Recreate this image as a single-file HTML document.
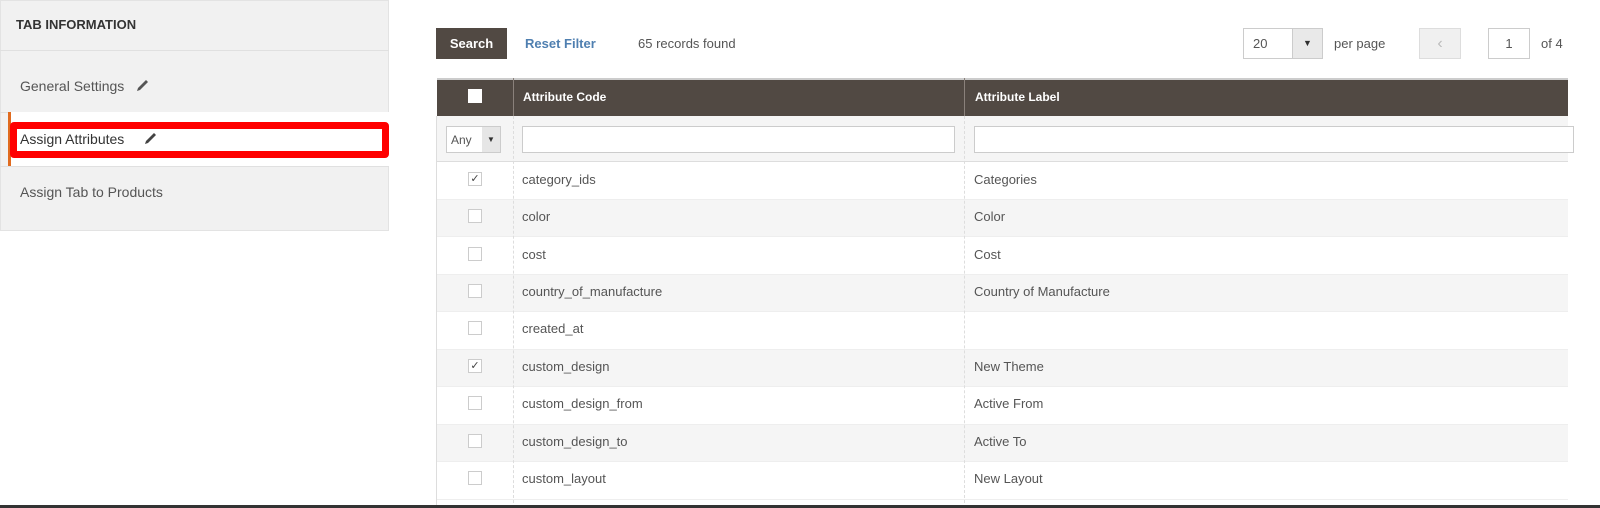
<!DOCTYPE html>
<html><head><style>
*{box-sizing:border-box;margin:0;padding:0}
body{width:1600px;height:508px;background:#fff;font-family:"Liberation Sans",sans-serif;position:relative;overflow:hidden;color:#303030}
.abs{position:absolute}
.side{left:0;top:0;width:389px;height:231px;background:#f1f1f1;border:1px solid #e3e3e3}
.sep{left:0;width:389px;height:1px;background:#e0e0e0}
.t{font-size:13px;color:#555}
.row{left:437px;width:1131px;height:37.5px;border-bottom:1px solid #eee}
.cb{width:14px;height:14px;border:1px solid #ccc;background:#fff;left:468px;font-size:11px;line-height:12px;text-align:center;color:#444}
.vd{width:1px;border-left:1px dashed #ddd}
</style></head><body>
<div class="abs side"></div>
<div class="abs" style="left:16px;top:17px;font-size:13px;font-weight:bold;color:#333">TAB INFORMATION</div>
<div class="abs sep" style="top:50px"></div>
<div class="abs t" style="left:20px;top:78px;font-size:14px">General Settings</div>
<svg class="abs" style="left:135px;top:78px" width="15" height="15" viewBox="0 0 15 15"><path d="M2 13 L3 10 L11 2 L13 4 L5 12 Z" fill="#555"/></svg>
<div class="abs sep" style="top:112px"></div>
<div class="abs" style="left:8px;top:112px;width:381px;height:54px;background:#fff;border-left:3px solid #e06b1f"></div>
<div class="abs" style="left:10px;top:122px;width:379px;height:36px;border:7px solid #f00;border-radius:4px"></div>
<div class="abs" style="left:20px;top:131px;font-size:14px;color:#333">Assign Attributes</div>
<svg class="abs" style="left:143px;top:131px" width="15" height="15" viewBox="0 0 15 15"><path d="M2 13 L3 10 L11 2 L13 4 L5 12 Z" fill="#444"/></svg>
<div class="abs sep" style="top:166px"></div>
<div class="abs t" style="left:20px;top:184px;font-size:14px">Assign Tab to Products</div>

<div class="abs" style="left:436px;top:28px;width:71px;height:31px;background:#514943;color:#fff;font-size:13px;font-weight:bold;line-height:31px;text-align:center">Search</div>
<div class="abs" style="left:525px;top:36px;font-size:13px;color:#4f7fb0;font-weight:bold">Reset Filter</div>
<div class="abs" style="left:638px;top:36px;font-size:13px;color:#555">65 records found</div>
<div class="abs" style="left:1243px;top:28px;width:80px;height:31px;border:1px solid #ccc;background:#fff"></div>
<div class="abs" style="left:1292px;top:29px;width:30px;height:29px;background:#e9e9e9;border-left:1px solid #ccc;font-size:9px;text-align:center;line-height:29px">▼</div>
<div class="abs" style="left:1253px;top:36px;font-size:13px;color:#555">20</div>
<div class="abs" style="left:1334px;top:36px;font-size:13px;color:#555">per page</div>
<div class="abs" style="left:1419px;top:28px;width:42px;height:31px;border:1px solid #ddd;background:#f0f0f0;color:#bbb;text-align:center;line-height:29px;font-size:16px">‹</div>
<div class="abs" style="left:1488px;top:28px;width:42px;height:31px;border:1px solid #ccc;text-align:center;line-height:29px;font-size:13px;color:#555">1</div>
<div class="abs" style="left:1541px;top:36px;font-size:13px;color:#555">of 4</div>

<div class="abs" style="left:437px;top:78px;width:1131px;height:38px;background:#514943;border-top:2px solid #ccc"></div>
<div class="abs" style="left:513px;top:78px;width:1px;height:38px;background:#8a817b"></div>
<div class="abs" style="left:964px;top:78px;width:1px;height:38px;background:#8a817b"></div>
<div class="abs" style="left:468px;top:89px;width:14px;height:14px;background:#fff"></div>
<div class="abs" style="left:523px;top:90px;font-size:12px;font-weight:bold;color:#fff">Attribute Code</div>
<div class="abs" style="left:975px;top:90px;font-size:12px;font-weight:bold;color:#fff">Attribute Label</div>
<div class="abs" style="left:437px;top:116px;width:1131px;height:46px;background:#f5f5f5;border-bottom:1px solid #ddd"></div>
<div class="abs" style="left:446px;top:126px;width:55px;height:27px;border:1px solid #ccc;background:#fff;font-size:12px;color:#555;padding:6px 0 0 4px">Any</div>
<div class="abs" style="left:482px;top:127px;width:18px;height:25px;background:#e6e6e6;font-size:8px;text-align:center;line-height:25px">▼</div>
<div class="abs" style="left:522px;top:126px;width:433px;height:27px;border:1px solid #ccc;background:#fff"></div>
<div class="abs" style="left:974px;top:126px;width:600px;height:27px;border:1px solid #ccc;background:#fff"></div>

<div class="abs row" style="top:162px;background:#fff"></div>
<div class="abs row" style="top:199.5px;background:#f5f5f5"></div>
<div class="abs row" style="top:237px;background:#fff"></div>
<div class="abs row" style="top:274.5px;background:#f5f5f5"></div>
<div class="abs row" style="top:312px;background:#fff"></div>
<div class="abs row" style="top:349.5px;background:#f5f5f5"></div>
<div class="abs row" style="top:387px;background:#fff"></div>
<div class="abs row" style="top:424.5px;background:#f5f5f5"></div>
<div class="abs row" style="top:462px;background:#fff"></div>
<div class="abs" style="left:436px;top:116px;width:1px;height:392px;background:#ddd"></div>
<div class="abs vd" style="left:513px;top:116px;height:392px"></div>
<div class="abs vd" style="left:964px;top:116px;height:392px"></div>

<div class="abs cb" style="top:172px">✓</div>
<div class="abs cb" style="top:209px"></div>
<div class="abs cb" style="top:247px"></div>
<div class="abs cb" style="top:284px"></div>
<div class="abs cb" style="top:321px"></div>
<div class="abs cb" style="top:359px">✓</div>
<div class="abs cb" style="top:396px"></div>
<div class="abs cb" style="top:434px"></div>
<div class="abs cb" style="top:471px"></div>

<div class="abs t" style="left:522px;top:172px">category_ids</div><div class="abs t" style="left:974px;top:172px">Categories</div>
<div class="abs t" style="left:522px;top:209px">color</div><div class="abs t" style="left:974px;top:209px">Color</div>
<div class="abs t" style="left:522px;top:247px">cost</div><div class="abs t" style="left:974px;top:247px">Cost</div>
<div class="abs t" style="left:522px;top:284px">country_of_manufacture</div><div class="abs t" style="left:974px;top:284px">Country of Manufacture</div>
<div class="abs t" style="left:522px;top:321px">created_at</div>
<div class="abs t" style="left:522px;top:359px">custom_design</div><div class="abs t" style="left:974px;top:359px">New Theme</div>
<div class="abs t" style="left:522px;top:396px">custom_design_from</div><div class="abs t" style="left:974px;top:396px">Active From</div>
<div class="abs t" style="left:522px;top:434px">custom_design_to</div><div class="abs t" style="left:974px;top:434px">Active To</div>
<div class="abs t" style="left:522px;top:471px">custom_layout</div><div class="abs t" style="left:974px;top:471px">New Layout</div>
<div class="abs" style="left:0;top:505px;width:1600px;height:3px;background:#333"></div>
</body></html>
